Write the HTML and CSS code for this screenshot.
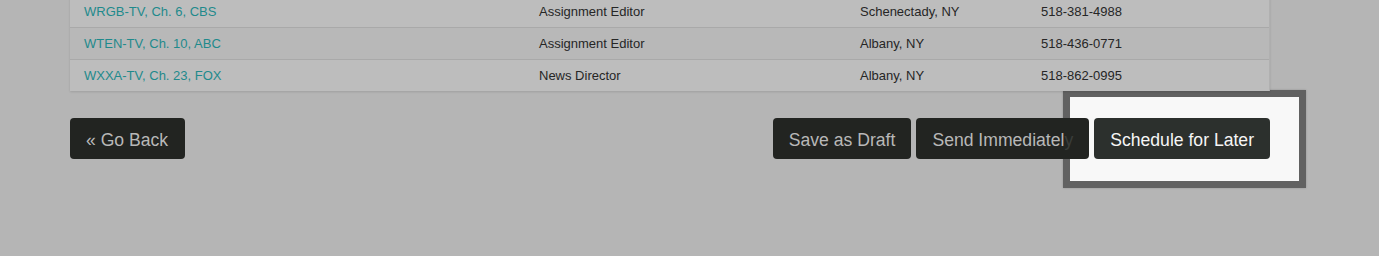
FILE: index.html
```html
<!DOCTYPE html>
<html lang="en">
<head>
  <meta charset="UTF-8" />
  <meta name="viewport" content="width=device-width, initial-scale=1" />
  <title>Send Release</title>
  <link rel="stylesheet" href="styles.css">
</head>
<body>

<div class="page">
  <div class="contacts">
    <div class="row">
      <a href="#" class="outlet">WRGB-TV, Ch. 6, CBS</a>
      <span>Assignment Editor</span>
      <span>Schenectady, NY</span>
      <span>518-381-4988</span>
    </div>
    <div class="row alt">
      <a href="#" class="outlet">WTEN-TV, Ch. 10, ABC</a>
      <span>Assignment Editor</span>
      <span>Albany, NY</span>
      <span>518-436-0771</span>
    </div>
    <div class="row">
      <a href="#" class="outlet">WXXA-TV, Ch. 23, FOX</a>
      <span>News Director</span>
      <span>Albany, NY</span>
      <span>518-862-0995</span>
    </div>
  </div>

  <div class="actions">
    <button class="btn btn-back">&laquo; Go Back</button>
    <div class="send-group">
      <button class="btn">Save as Draft</button>
      <button class="btn">Send Immediatel<span class="faded">y</span></button>
      <span class="tour-target">
        <button class="btn btn-active">Schedule for Later</button>
      </span>
    </div>
  </div>
</div>

</body>
</html>
```

FILE: styles.css
```css
html, body { min-height: 256px; }
body {
  margin: 0;
  background: #b5b5b5;
  font-family: "Liberation Sans", Arial, Helvetica, sans-serif;
  color: #262626;
}
.page {
  width: 1200px;
  margin: -5px 0 0 70px;
  padding-bottom: 100px;
}
.contacts {
  background: #bdbdbd;
  border-right: 1px solid #b0b0b0;
  box-shadow: 0 1px 2px rgb(0 0 0 / 0.12);
}
.row {
  display: grid;
  grid-template-columns: 455px 321px 181px 1fr;
  align-items: center;
  height: 31px;
  font-size: 13px;
  border-top: 1px solid #a9a9a9;
}
.row:first-child { border-top: none; height: 32px; }
.row.alt { background: #b8b8b8; }
.row > * { padding: 0 14px; }
.outlet {
  color: #1f8a8c;
  text-decoration: none;
}
.actions {
  display: flex;
  justify-content: space-between;
  margin-top: 27px;
}
.send-group {
  display: flex;
  gap: 5px;
}
.btn {
  background: #222421;
  color: #b8b8b8;
  border: none;
  border-radius: 4px;
  height: 41px;
  padding: 3px 16px 0;
  font-family: inherit;
  font-size: 17.6px;
  white-space: nowrap;
  cursor: pointer;
}
.btn-back { padding: 3px 17px 0 16px; }
.faded { color: #3a3d3a; }
.tour-target {
  position: relative;
  display: flex;
}
.tour-target::before {
  content: "";
  position: absolute;
  top: -28px;
  right: -36px;
  bottom: -29px;
  left: -31px;
  z-index: -1;
  background: #f8f8f8;
  border: 7px solid #616161;
  box-shadow: 0 0 2px rgb(0 0 0 / 0.2);
}
.btn-active {
  background: #2c302d;
  color: #f6f6f6;
}
```
